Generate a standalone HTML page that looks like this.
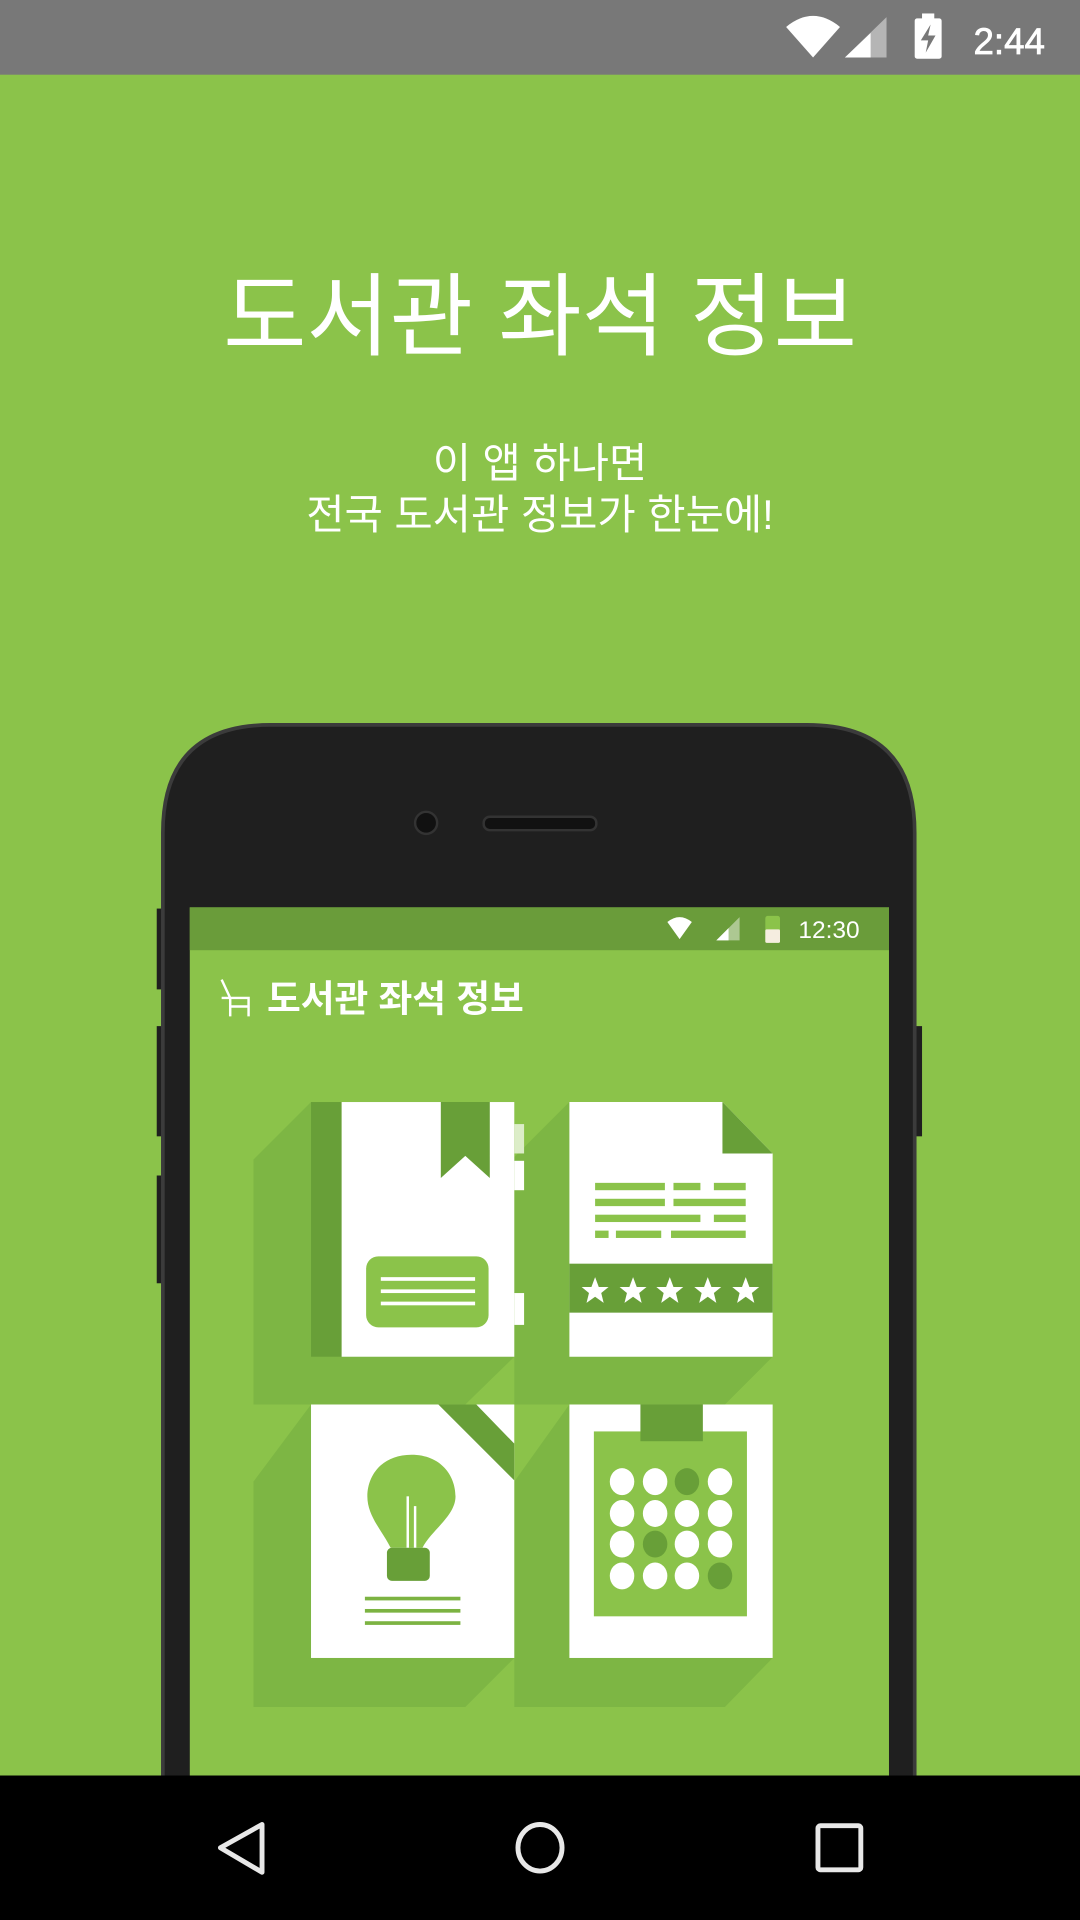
<!DOCTYPE html>
<html><head><meta charset="utf-8"><style>
html,body{margin:0;padding:0;width:1080px;height:1920px;overflow:hidden;background:#8BC34A}
svg{display:block}
text{font-family:"Liberation Sans","Noto Sans CJK KR",sans-serif}
</style></head><body>
<svg width="1080" height="1920" viewBox="0 0 882 1568" xmlns="http://www.w3.org/2000/svg">
<rect width="882" height="1568" fill="#8BC34A"/>
<!-- status bar -->
<rect width="882" height="61" fill="#787878"/>
<path d="M642 22 Q664 4 686 22 L664 47 Z" fill="#fff"/>
<path d="M690 47 L724 14 L724 47 Z" fill="#fff" opacity="0.45"/>
<path d="M690 47 L711 27 L711 47 Z" fill="#fff"/>
<rect x="747" y="15" width="22" height="33" rx="2" fill="#fff"/>
<rect x="753" y="11" width="10" height="5" fill="#fff"/>
<path d="M760 20 L752 33 L758 33 L756 43 L764 29 L758 29 Z" fill="#787878"/>
<text x="795" y="44" font-size="30" fill="#fff" stroke="#fff" stroke-width="0.6">2:44</text>
<!-- titles -->
<text x="441" y="284" font-size="74" fill="#fff" text-anchor="middle">도서관 좌석 정보</text>
<text x="441" y="390" font-size="34" fill="#fff" text-anchor="middle">이 앱 하나면</text>
<text x="441" y="432" font-size="34" fill="#fff" text-anchor="middle">전국 도서관 정보가 한눈에!</text>
<!-- phone -->
<rect x="128" y="742" width="6" height="66" fill="#1f1f1f"/>
<rect x="128" y="838" width="6" height="90" fill="#1f1f1f"/>
<rect x="128" y="960" width="6" height="88" fill="#1f1f1f"/>
<rect x="746" y="838" width="7" height="90" fill="#1f1f1f"/>
<path d="M133 1460 L133 680 Q133 592 221 592 L659 592 Q747 592 747 680 L747 1460 Z" fill="#1f1f1f" stroke="#3b3b3b" stroke-width="3"/>
<circle cx="348" cy="672" r="9" fill="#111" stroke="#333" stroke-width="2"/>
<rect x="395" y="667" width="92" height="11" rx="5" fill="#111" stroke="#333" stroke-width="2"/>
<rect x="155" y="741" width="571" height="720" fill="#8BC34A"/>
<rect x="155" y="741" width="571" height="35" fill="#6A9C3A"/>
<path d="M545 753 Q555 745 565 753 L555 767 Z" fill="#fff"/>
<path d="M585 768 L604 749 L604 768 Z" fill="#fff" opacity="0.45"/>
<path d="M585 768 L595 758 L595 768 Z" fill="#fff"/>
<rect x="625" y="748" width="12" height="22" rx="2" fill="#8BC34A"/>
<rect x="625" y="759" width="12" height="11" rx="1" fill="#f5ede0"/>
<text x="652" y="766" font-size="20" fill="#fff">12:30</text>
<path d="M181 800 L188 815 L188 830 M181 815 L203 815 L203 830 M188 822 L203 822" stroke="#fff" stroke-width="2" fill="none"/>
<text x="218" y="826" font-size="30" font-weight="bold" fill="#fff">도서관 좌석 정보</text>
<!-- shadows -->
<g fill="#7DB644">
<path d="M254 900 L207 947 L207 1147 L380 1147 L420 1108 Z"/>
<path d="M465 900 L420 945 L420 1147 L592 1147 L631 1108 Z"/>
<path d="M254 1147 L207 1210 L207 1394 L380 1394 L420 1354 Z"/>
<path d="M465 1147 L420 1210 L420 1394 L592 1394 L631 1354 Z"/>
</g>
<!-- book -->
<rect x="254" y="900" width="25" height="208" fill="#689F38"/>
<rect x="279" y="900" width="141" height="208" fill="#fff"/>
<path d="M360 900 L400 900 L400 962 L380 944 L360 962 Z" fill="#689F38"/>
<rect x="420" y="918" width="8" height="24" fill="#DCEDC8"/>
<rect x="420" y="948" width="8" height="24" fill="#fff"/>
<rect x="420" y="1056" width="8" height="26" fill="#fff"/>
<rect x="299" y="1026" width="100" height="58" rx="10" fill="#8BC34A"/>
<g fill="#fff"><rect x="311" y="1043" width="77" height="3"/><rect x="311" y="1053" width="77" height="3"/><rect x="311" y="1063" width="77" height="3"/></g>
<!-- doc -->
<path d="M465 900 L590 900 L631 942 L631 1108 L465 1108 Z" fill="#fff"/>
<path d="M590 900 L590 942 L631 942 Z" fill="#689F38"/>
<g fill="#8BC34A">
<rect x="486" y="966" width="57" height="6"/><rect x="550" y="966" width="22" height="6"/><rect x="583" y="966" width="26" height="6"/>
<rect x="486" y="979" width="57" height="6"/><rect x="550" y="979" width="59" height="6"/>
<rect x="486" y="992" width="86" height="6"/><rect x="583" y="992" width="26" height="6"/>
<rect x="486" y="1005" width="11" height="6"/><rect x="503" y="1005" width="37" height="6"/><rect x="548" y="1005" width="61" height="6"/>
</g>
<rect x="465" y="1032" width="166" height="40" fill="#689F38"/>
<g fill="#fff">
<path id="st" d="M486 1043 L489 1051 L497 1051 L491 1056 L493 1064 L486 1059 L479 1064 L481 1056 L475 1051 L483 1051 Z"/>
<use href="#st" x="31"/><use href="#st" x="61"/><use href="#st" x="92"/><use href="#st" x="123"/>
</g>
<!-- bulb card -->
<rect x="254" y="1147" width="166" height="207" fill="#fff"/>
<path d="M358 1147 L389 1147 L420 1179 L420 1209 Z" fill="#689F38"/>
<path d="M336 1188 C312 1188 300 1205 300 1222 C300 1238 312 1250 319 1264 L345 1264 C352 1250 372 1238 372 1222 C372 1205 360 1188 336 1188 Z" fill="#8BC34A"/>
<rect x="332" y="1222" width="2" height="44" fill="#fff"/>
<rect x="338" y="1230" width="2" height="36" fill="#fff"/>
<rect x="316" y="1264" width="35" height="27" rx="4" fill="#689F38"/>
<g fill="#7CB342"><rect x="298" y="1304" width="78" height="3"/><rect x="298" y="1314" width="78" height="3"/><rect x="298" y="1324" width="78" height="3"/></g>
<!-- calendar -->
<rect x="465" y="1147" width="166" height="207" fill="#fff"/>
<rect x="485" y="1169" width="125" height="151" fill="#8BC34A"/>
<rect x="523" y="1147" width="51" height="30" fill="#689F38"/>
<g fill="#fff">
<ellipse cx="508" cy="1210" rx="10" ry="11"/><ellipse cx="535" cy="1210" rx="10" ry="11"/><ellipse cx="561" cy="1210" rx="10" ry="11" fill="#689F38"/><ellipse cx="588" cy="1210" rx="10" ry="11"/>
<ellipse cx="508" cy="1236" rx="10" ry="11"/><ellipse cx="535" cy="1236" rx="10" ry="11"/><ellipse cx="561" cy="1236" rx="10" ry="11"/><ellipse cx="588" cy="1236" rx="10" ry="11"/>
<ellipse cx="508" cy="1261" rx="10" ry="11"/><ellipse cx="535" cy="1261" rx="10" ry="11" fill="#689F38"/><ellipse cx="561" cy="1261" rx="10" ry="11"/><ellipse cx="588" cy="1261" rx="10" ry="11"/>
<ellipse cx="508" cy="1287" rx="10" ry="11"/><ellipse cx="535" cy="1287" rx="10" ry="11"/><ellipse cx="561" cy="1287" rx="10" ry="11"/><ellipse cx="588" cy="1287" rx="10" ry="11" fill="#689F38"/>
</g>
<!-- nav bar -->
<rect x="0" y="1450" width="882" height="118" fill="#000"/>
<path d="M214 1490 L214 1529 L180 1509 Z" fill="none" stroke="#e8e8e8" stroke-width="4" stroke-linejoin="round"/>
<ellipse cx="441" cy="1509" rx="18" ry="19" fill="none" stroke="#e8e8e8" stroke-width="4"/>
<rect x="668" y="1491" width="35" height="36" rx="2" fill="none" stroke="#e8e8e8" stroke-width="4"/>
</svg>
</body></html>
